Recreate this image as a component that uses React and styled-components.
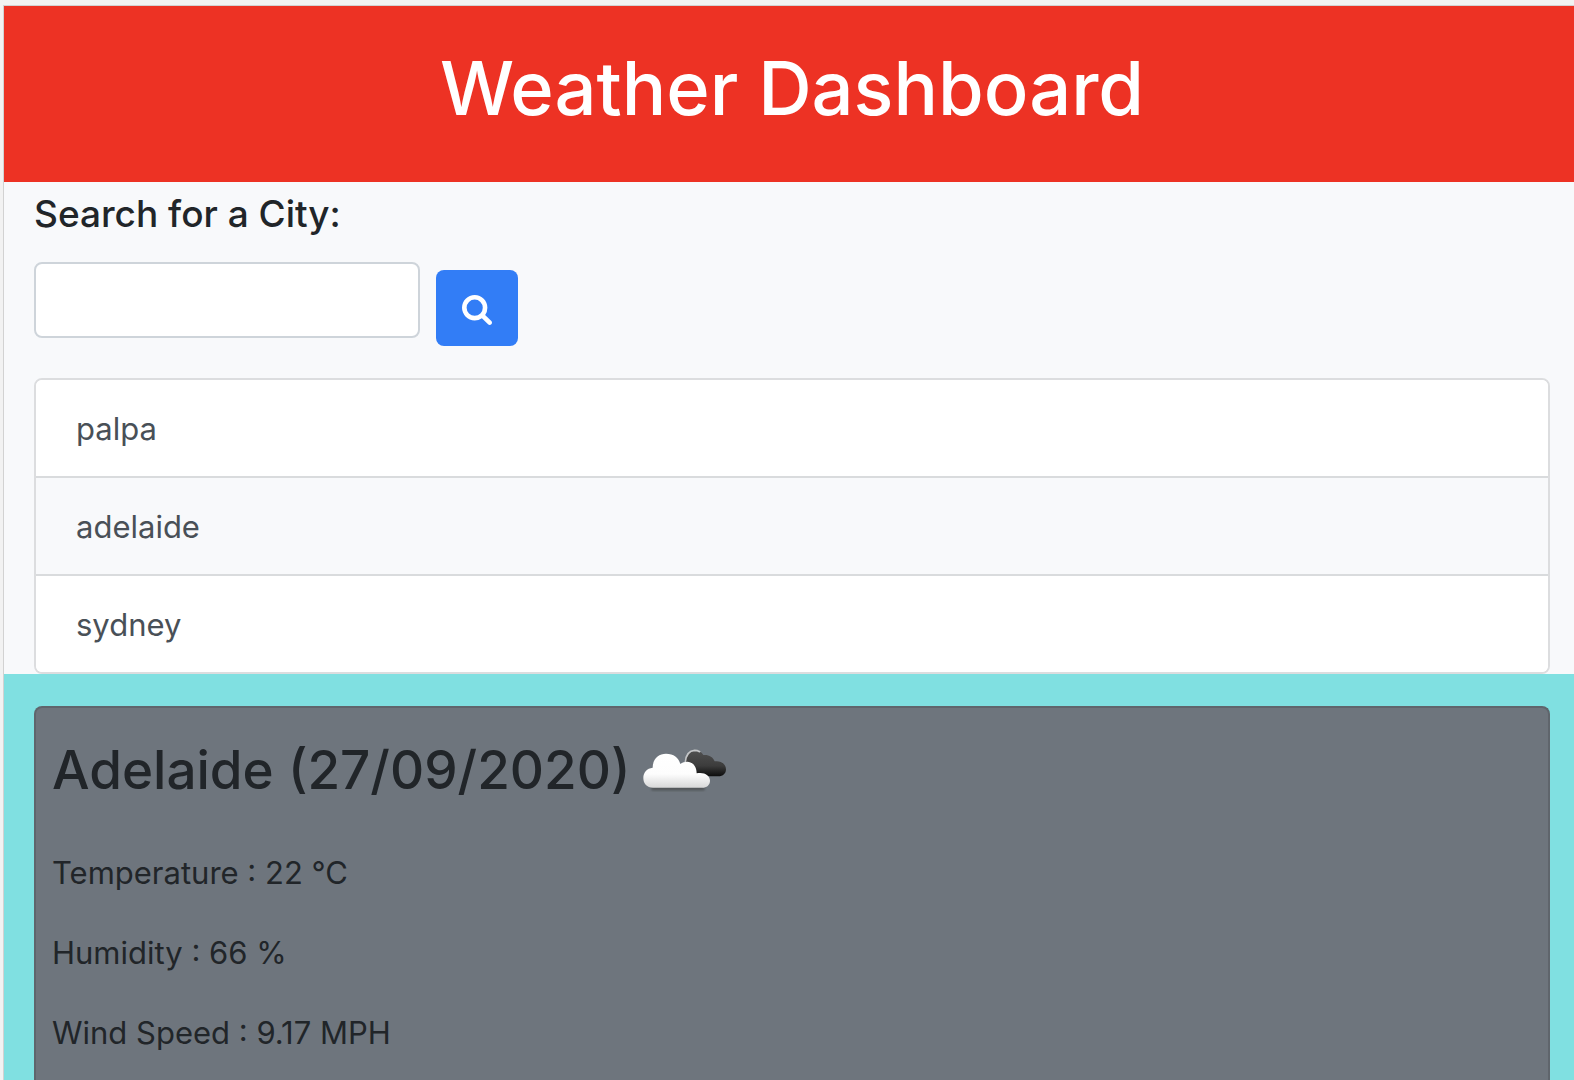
import React, { useState } from "react";
import styled, { createGlobalStyle } from "styled-components";

const GlobalStyle = createGlobalStyle`
  * { box-sizing: border-box; }
  body {
    margin: 0;
    background: #f2f2f2;
    color: #212529;
    font-family: Inter, Roboto, "Liberation Sans", sans-serif;
    font-size: 31px;
    line-height: 48px;
  }
`;

const Page = styled.div`
  display: flex;
  flex-direction: column;
  height: 100vh;
  padding: 5px 0 0 3px;
  overflow: hidden;
`;

const Frame = styled.div`
  display: flex;
  flex: 1;
  flex-direction: column;
  border-top: 1px solid #d2d2d2;
  border-left: 1px solid #d2d2d2;
`;

const Header = styled.header`
  padding: 34px 24px 46px 30px;
  background: #ed3224;
  color: #fff;
  text-align: center;
`;

const Title = styled.h1`
  margin: 0;
  font-size: 74px;
  font-weight: 500;
  line-height: 96px;
`;

const SearchPanel = styled.section`
  padding: 8px 24px 0 30px;
  background: #f8f9fb;
`;

const SearchLabel = styled.label`
  display: block;
  margin-bottom: 24px;
  font-size: 37px;
  font-weight: 500;
  line-height: 48px;
`;

const SearchForm = styled.form`
  display: flex;
  gap: 16px;
  margin-bottom: 32px;
`;

const CityInput = styled.input`
  width: 386px;
  height: 76px;
  padding: 12px 24px;
  border: 2px solid #ced4da;
  border-radius: 8px;
  background: #fff;
  color: #495057;
  font: inherit;
`;

const SearchButton = styled.button`
  display: flex;
  align-items: center;
  justify-content: center;
  width: 82px;
  height: 76px;
  margin-top: 8px;
  padding: 4px 0 0;
  border: 0;
  border-radius: 8px;
  background: #327df6;
  color: #fff;
  cursor: pointer;
`;

const CityList = styled.ul`
  margin: 0;
  padding: 0;
  overflow: hidden;
  border: 2px solid #dcdddf;
  border-radius: 8px;
  background: #fff;
  list-style: none;
`;

const CityItem = styled.li`
  & + & { border-top: 2px solid #d9dbdd; }
`;

const CityButton = styled.button`
  display: block;
  width: 100%;
  padding: 25px 40px 23px;
  border: 0;
  background: ${(p) => (p.$active ? "#f8f9fb" : "#fff")};
  color: #495057;
  font: inherit;
  text-align: left;
  cursor: pointer;
`;

const Results = styled.main`
  display: flex;
  flex: 1;
  padding: 32px 24px 0 30px;
  background: #80e0e1;
`;

const WeatherCard = styled.article`
  flex: 1;
  padding: 16px;
  border: 2px solid #5f656c;
  border-bottom: 0;
  border-radius: 8px 8px 0 0;
  background: #6e757d;
`;

const CardTitle = styled.h2`
  display: flex;
  align-items: center;
  gap: 12px;
  margin: 0 0 33px;
  font-size: 53px;
  font-weight: 500;
  line-height: 92px;
`;

const Reading = styled.p`
  margin: 0 0 32px;
`;

const SearchIcon = () => (
  <svg width="30" height="30" viewBox="0 128 1664 1664" fill="currentColor" aria-hidden="true">
    <path d="M1152 832q0-185-131.500-316.500t-316.500-131.500-316.500 131.500-131.500 316.500 131.500 316.500 316.500 131.500 316.500-131.500 131.500-316.500zm512 832q0 52-38 90t-90 38q-54 0-90-38l-343-342q-179 124-399 124-143 0-273.500-55.500t-225-150-150-225-55.500-273.500 55.500-273.500 150-225 225-150 273.500-55.500 273.500 55.500 225 150 150 225 55.500 273.500q0 220-124 399l343 343q37 37 37 90z" />
  </svg>
);

const CloudIcon = () => (
  <svg width="86" height="44" viewBox="39 40 258 132" role="img" aria-label="Broken clouds">
    <defs>
      <linearGradient id="front" x1="0" y1="0" x2="0" y2="1">
        <stop offset="0" stopColor="#fff" />
        <stop offset="0.6" stopColor="#fdfdfd" />
        <stop offset="1" stopColor="#d8d8d8" />
      </linearGradient>
      <linearGradient id="back" x1="0" y1="0" x2="0" y2="1">
        <stop offset="0" stopColor="#505050" />
        <stop offset="0.6" stopColor="#3c3c3c" />
        <stop offset="1" stopColor="#0c0c0c" />
      </linearGradient>
      <filter id="soft" x="-10%" y="-100%" width="120%" height="300%">
        <feGaussianBlur stdDeviation="2.500" />
      </filter>
    </defs>
    <path d="M170 82C172 58 184 46 198 46C209 46 218 52 223 61C238 59 252 66 257 80C276 77 291 88 291 104C291 117 282 125 268 125H200Z" fill="url(#back)" />
    <path d="M169 82C171 60 182 48 197 47Q205 47 212 51" fill="none" stroke="#c4c6c8" strokeWidth="5" strokeLinecap="round" />
    <rect x="66" y="154" width="162" height="14" rx="6" fill="#55585b" filter="url(#soft)" />
    <path d="M72 159C54 159 43 147 43 130C43 113 54 101 71 99C71 73 88 57 111 57C134 57 149 69 154 88C160 83 167 81 175 81C192 82 203 96 203 116C225 111 243 122 243 138C243 151 233 159 220 159Z" fill="url(#front)" />
  </svg>
);

const cities = ["palpa", "adelaide", "sydney"];
const readings = ["Temperature : 22 °C", "Humidity : 66 %", "Wind Speed : 9.17 MPH"];

export default function App() {
  const [active, setActive] = useState("adelaide");
  return (
    <>
      <GlobalStyle />
      <Page>
        <Frame>
          <Header>
            <Title>Weather Dashboard</Title>
          </Header>
          <SearchPanel>
            <SearchLabel htmlFor="city">Search for a City:</SearchLabel>
            <SearchForm onSubmit={(e) => e.preventDefault()}>
              <CityInput id="city" type="text" />
              <SearchButton type="submit" aria-label="Search">
                <SearchIcon />
              </SearchButton>
            </SearchForm>
            <CityList>
              {cities.map((city) => (
                <CityItem key={city}>
                  <CityButton type="button" $active={city === active} onClick={() => setActive(city)}>
                    {city}
                  </CityButton>
                </CityItem>
              ))}
            </CityList>
          </SearchPanel>
          <Results>
            <WeatherCard>
              <CardTitle>
                Adelaide (27/09/2020)
                <CloudIcon />
              </CardTitle>
              {readings.map((text) => (
                <Reading key={text}>{text}</Reading>
              ))}
            </WeatherCard>
          </Results>
        </Frame>
      </Page>
    </>
  );
}
